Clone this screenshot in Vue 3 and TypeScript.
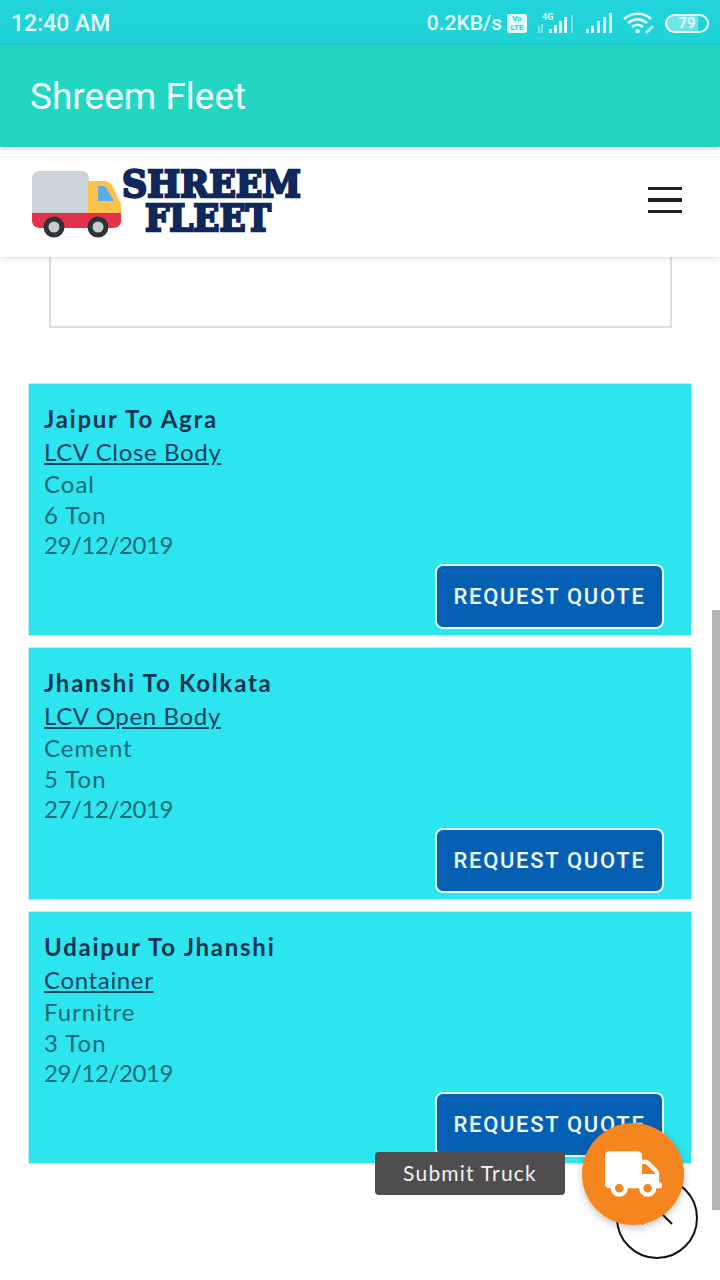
<template>
  <div class="screen">
    <div class="statusbar">
      <span class="clock">12:40 AM</span>
      <div class="status-right">
        <span class="speed">0.2KB/s</span>
        <span class="volte">Vo<br>LTE</span>
        <svg class="sig-4g" width="40" height="26" viewBox="0 0 40 26">
          <text x="5" y="10" class="tiny">4G</text>
          <path d="M2 16v7M5 14v9" stroke="#d6f7f7" stroke-width="1.3" opacity=".8" />
          <path d="M12 19h3v4h-3zM17 15h3v8h-3zM22 11h3v12h-3zM27 7h3v16h-3z" fill="#e4fbfb" />
          <path d="M34 5h2v18h-2z" fill="#e4fbfb" opacity=".4" />
        </svg>
        <svg class="sig" width="28" height="22" viewBox="0 0 28 22">
          <path d="M1 17h3v4H1zM6 14h3v7H6zM12 9h3v12h-3zM18 5h3v16h-3zM24 1h3v20h-3z" fill="#e4fbfb" />
        </svg>
        <svg class="wifi" width="33" height="24" viewBox="0 0 33 24" fill="none" stroke="#e4fbfb" stroke-width="2.6">
          <path d="M1 8c8-7 20-7 27 0" />
          <path d="M5 12c6-5 13-5 19 0" />
          <path d="M9 16c3-3 8-3 11 0" />
          <circle cx="14.500" cy="20" r="2.200" fill="#e4fbfb" stroke="none" />
          <path d="M23 22l7-7" stroke-width="3" opacity=".7" />
        </svg>
        <span class="battery">79</span>
      </div>
    </div>

    <div class="appbar">Shreem Fleet</div>

    <header class="site-header">
      <div class="logo">
        <svg class="truck" width="92" height="74" viewBox="0 0 92 74">
          <path d="M1 12c0-5 3-8 8-8h41c5 0 8 3 8 8v36H1z" fill="#ccd3d9" />
          <path d="M57 14h15c5 0 8 2 10 6l8 17v12H57z" fill="#fcc24c" />
          <path d="M67 19h5c2 0 3 1 4 3l7 12H67z" fill="#5dade9" />
          <path d="M1 46h89v7c0 5-3 8-8 8H9c-5 0-8-3-8-8z" fill="#e4324a" />
          <circle cx="23" cy="60" r="10.500" fill="#2d3338" />
          <circle cx="23" cy="60" r="5.500" fill="#c6ccd0" />
          <circle cx="67" cy="60" r="10.500" fill="#2d3338" />
          <circle cx="67" cy="60" r="5.500" fill="#c6ccd0" />
        </svg>
        <svg class="logo-text" width="190" height="90" viewBox="0 0 190 90">
          <text x="2" y="39.500" textLength="179" lengthAdjust="spacingAndGlyphs" class="logo-word">SHREEM</text>
          <text x="25" y="73.500" textLength="126" lengthAdjust="spacingAndGlyphs" class="logo-word">FLEET</text>
        </svg>
      </div>
      <div class="burger"><i></i><i></i><i></i></div>
    </header>

    <main class="content">
      <div class="empty-box"></div>
      <div class="card" v-for="load in loads" :key="load.route">
        <h3>{{ load.route }}</h3>
        <a class="truck-type">{{ load.truck }}</a>
        <p>{{ load.material }}</p>
        <p>{{ load.weight }}</p>
        <p class="date">{{ load.date }}</p>
        <div class="actions">
          <button class="quote-btn">REQUEST QUOTE</button>
        </div>
      </div>
    </main>

    <div class="scrollbar"></div>

    <div class="to-top">
      <svg width="82" height="82" viewBox="0 0 82 82" fill="none" stroke="#111" stroke-width="2">
        <path d="M26 47l15-15 15 15" />
      </svg>
    </div>
    <div class="fab-label">Submit Truck</div>
    <div class="fab">
      <svg width="57" height="46" viewBox="0 0 640 512">
        <path fill="#fff" d="M624 352h-16V243.900c0-12.700-5.100-24.900-14.100-33.900L494 110.100c-9-9-21.200-14.100-33.900-14.100H416V48c0-26.500-21.500-48-48-48H48C21.500 0 0 21.500 0 48v320c0 26.500 21.500 48 48 48h16c0 53 43 96 96 96s96-43 96-96h128c0 53 43 96 96 96s96-43 96-96h48c8.800 0 16-7.200 16-16v-32c0-8.800-7.200-16-16-16zM160 464c-26.500 0-48-21.500-48-48s21.500-48 48-48 48 21.500 48 48-21.500 48-48 48zm320 0c-26.500 0-48-21.500-48-48s21.500-48 48-48 48 21.500 48 48-21.500 48-48 48zm80-208H416V144h44.100l99.900 99.900V256z" />
      </svg>
    </div>
  </div>
</template>

<script setup lang="ts">
interface Load {
  route: string;
  truck: string;
  material: string;
  weight: string;
  date: string;
}

const loads: Load[] = [
  { route: 'Jaipur To Agra', truck: 'LCV Close Body', material: 'Coal', weight: '6 Ton', date: '29/12/2019' },
  { route: 'Jhanshi To Kolkata', truck: 'LCV Open Body', material: 'Cement', weight: '5 Ton', date: '27/12/2019' },
  { route: 'Udaipur To Jhanshi', truck: 'Container', material: 'Furnitre', weight: '3 Ton', date: '29/12/2019' }
]
</script>

<style>
html, body {
  margin: 0;
  background: #fff;
}
</style>

<style scoped>
.screen {
  position: relative;
  width: 720px;
  height: 1280px;
  overflow: hidden;
  display: flex;
  flex-direction: column;
  background: #fff;
  font-family: "Lato", "Noto Sans", sans-serif;
}

.statusbar {
  height: 45px;
  flex-shrink: 0;
  display: flex;
  align-items: center;
  justify-content: space-between;
  padding: 1px 11px 0;
  box-sizing: border-box;
  background: linear-gradient(180deg, #22d3dc, #20d3d6);
  color: #e4fbfb;
  font-family: "Roboto", sans-serif;
  font-weight: 500;
}

.clock {
  font-size: 23px;
}

.status-right {
  display: flex;
  align-items: center;
}

.speed {
  font-size: 21px;
  margin-right: 5px;
}

.volte {
  width: 20px;
  height: 19px;
  background: #e4fbfb;
  color: #20d3da;
  font-size: 8px;
  line-height: 9px;
  text-align: center;
  font-weight: 700;
  border-radius: 2px;
  margin-right: 10px;
}

.tiny {
  font-size: 9px;
  font-weight: 700;
  fill: #e4fbfb;
}

.sig-4g {
  margin-right: 8px;
}

.sig {
  margin-right: 10px;
}

.wifi {
  margin-right: 9px;
}

.battery {
  width: 40px;
  height: 15px;
  border: 2px solid #e4fbfb;
  border-radius: 10px;
  font-size: 15px;
  line-height: 15px;
  text-align: center;
  font-weight: 700;
  background: linear-gradient(90deg, #6fe3e6 78%, transparent 78%);
}

.appbar {
  height: 102px;
  flex-shrink: 0;
  display: flex;
  align-items: center;
  padding: 1px 0 0 30px;
  background: #23d6c1;
  color: #f4fdfc;
  font-family: "Roboto", sans-serif;
  font-size: 37px;
  box-sizing: border-box;
  box-shadow: 0 1px 4px rgba(0, 0, 0, 0.25);
  position: relative;
  z-index: 3;
}

.site-header {
  height: 110px;
  flex-shrink: 0;
  display: flex;
  align-items: center;
  justify-content: space-between;
  padding: 0 38px 0 31px;
  box-sizing: border-box;
  background: #fff;
  box-shadow: 0 1px 5px rgba(0, 0, 0, 0.15);
  position: relative;
  z-index: 2;
}

.logo {
  display: flex;
  align-items: center;
}

.truck {
  margin-top: 4px;
}

.logo-text {
  margin-left: -3px;
}

.logo-word {
  font-family: "DejaVu Serif", serif;
  font-weight: 700;
  font-size: 37px;
  fill: #10275a;
  stroke: #10275a;
  stroke-width: 2.4px;
}

.burger {
  display: flex;
  flex-direction: column;
  gap: 8px;
  margin-bottom: 4px;
}

.burger i {
  display: block;
  width: 34px;
  height: 3.500px;
  background: #222;
}

.content {
  flex: 1;
  display: flex;
  flex-direction: column;
  gap: 11px;
  padding: 0 28px;
  overflow: hidden;
}

.empty-box {
  height: 71px;
  margin: 0 20px 44px 21px;
  box-sizing: border-box;
  border: 2px solid #ddd;
  border-top: 0;
  flex-shrink: 0;
}

.card {
  flex-shrink: 0;
  height: 253px;
  box-sizing: border-box;
  padding: 19px 27px 0 15px;
  border: 1px solid #c3e9ec;
  background: #2de5ee;
  color: #1e6a77;
  font-size: 24px;
  line-height: 30.500px;
  letter-spacing: 1px;
}

.card h3 {
  margin: 0;
  font-size: 24px;
  font-weight: 700;
  line-height: 31px;
  letter-spacing: 1.750px;
  color: #10344f;
}

.truck-type {
  display: block;
  line-height: 35px;
  letter-spacing: 0.650px;
  color: #10425f;
  text-decoration: underline;
}

.card p {
  margin: 0;
}

.card p.date {
  letter-spacing: -0.400px;
}

.actions {
  display: flex;
  justify-content: flex-end;
  margin-top: 3px;
}

.quote-btn {
  width: 229px;
  height: 65px;
  border: 2px solid #e6fbfc;
  border-radius: 8px;
  background: #0560b4;
  color: #eef8ff;
  font-family: "Roboto", sans-serif;
  font-size: 22px;
  font-weight: 500;
  letter-spacing: 1.700px;
  padding: 0;
}

.scrollbar {
  position: absolute;
  right: 0;
  top: 610px;
  width: 8px;
  height: 600px;
  background: #b5b5b5;
}

.to-top {
  position: absolute;
  left: 616px;
  top: 1177px;
  width: 82px;
  height: 82px;
  box-sizing: border-box;
  border: 2px solid #111;
  border-radius: 50%;
}

.to-top svg {
  position: absolute;
  left: -2px;
  top: -2px;
}

.fab-label {
  position: absolute;
  left: 375px;
  top: 1152px;
  width: 190px;
  height: 43px;
  border-radius: 4px;
  background: #4f4d4e;
  color: #f3f3f3;
  font-size: 21px;
  line-height: 42px;
  letter-spacing: 1.200px;
  text-align: center;
}

.fab {
  position: absolute;
  left: 582px;
  top: 1123px;
  width: 102px;
  height: 102px;
  border-radius: 50%;
  background: #f5851f;
  box-shadow: 0 3px 8px rgba(0, 0, 0, 0.22);
  display: flex;
  align-items: center;
  justify-content: center;
}

.fab svg {
  margin-left: 1px;
}
</style>
